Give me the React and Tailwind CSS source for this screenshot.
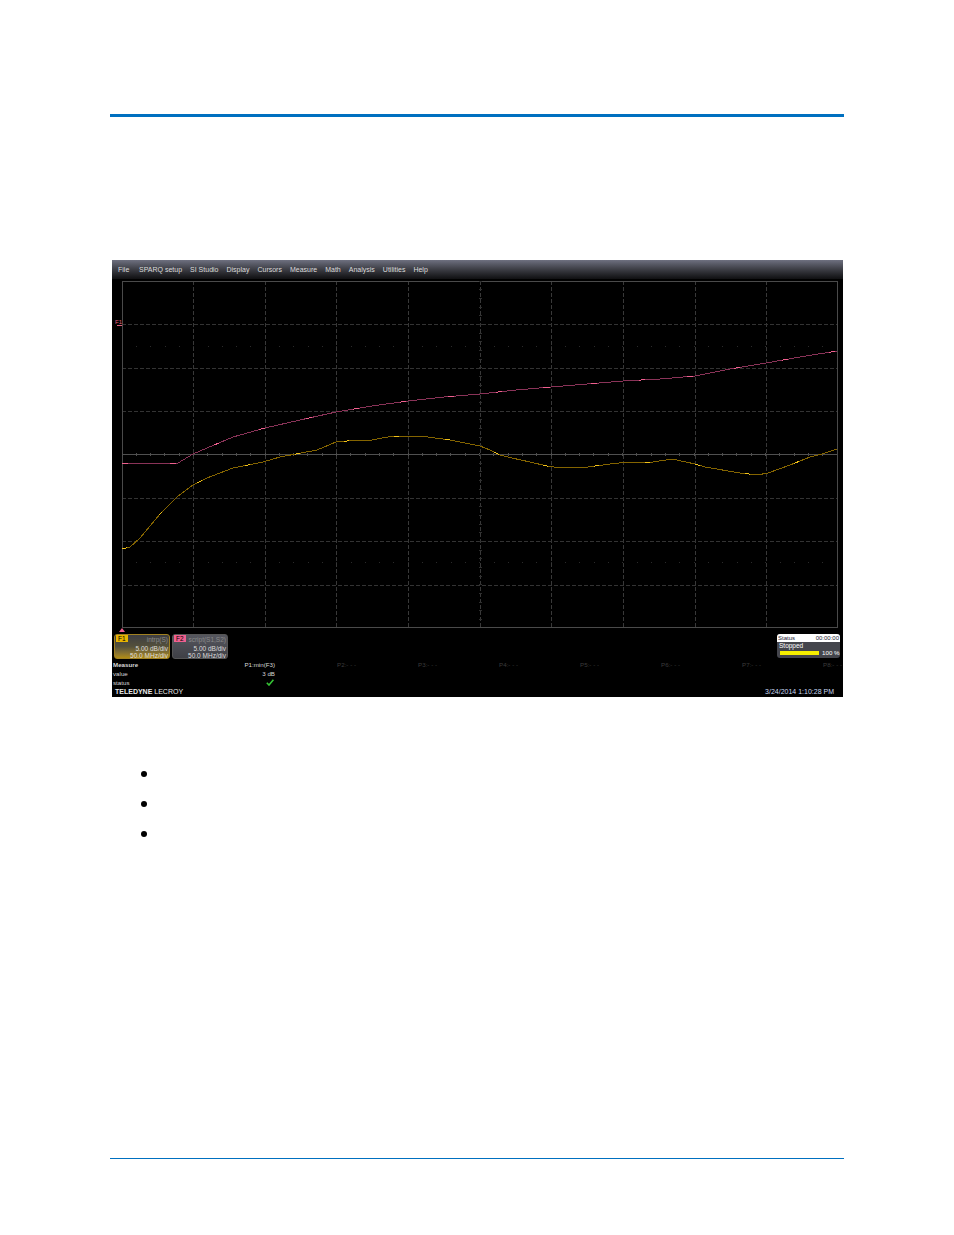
const menu = ['File', 'SPARQ setup', 'SI Studio', 'Display', 'Cursors', 'Measure', 'Math', 'Analysis', 'Utilities', 'Help'];
const vLines = [193, 265, 336, 408, 480, 551, 623, 695, 766];
const hLines = [324, 368, 411, 498, 541, 585];

const pink = '122,463 178,463 193,454 207,448 233,437 265,428 300,420 336,412 372,406 408,401 444,397 480,394 516,390 551,387 587,384 623,381 660,379 695,376 730,369 766,363 800,357 837,351';
const yellow = '122,549 130,547 140,538 150,526 160,514 177,497 193,485 207,478 233,468 263,462 280,457 317,450 336,442 347,441 372,440 393,436 408,436 428,437 450,440 480,446 490,450 500,455 512,458 530,462 547,466 554,467 588,467 610,464 628,462 653,462 672,459 695,464 705,467 740,473 757,475 768,473 790,465 810,457 822,454 837,449';

const hTicks = Array.from({ length: 50 }, (_, i) => 122 + i * 14.3);
const vTicks = Array.from({ length: 40 }, (_, i) => 281 + i * 8.68);
const dots = Array.from({ length: 50 }, (_, i) => 136 + i * 14.3);

function Plot() {
  return (
    <svg className="block" width="731" height="355" viewBox="112 279 731 355" shapeRendering="crispEdges">
      {vLines.map((x) => (
        <line key={x} x1={x} x2={x} y1="281" y2="627" stroke="#383838" strokeDasharray="4 2" />
      ))}
      {hLines.map((y) => (
        <line key={y} x1="122" x2="837" y1={y} y2={y} stroke="#333" strokeDasharray="4 2" />
      ))}
      {[346, 562].map((y) =>
        dots.map((x) => <rect key={`${x}-${y}`} x={x} y={y} width="1" height="1" fill="#2a2a2a" />)
      )}
      <rect x="122.5" y="281.5" width="715" height="346" fill="none" stroke="#4a4a4a" />
      <line x1="122" x2="837" y1="454.5" y2="454.5" stroke="#505050" />
      {hTicks.map((x) => (
        <line key={x} x1={x} x2={x} y1="453" y2="456" stroke="#505050" />
      ))}
      {vTicks.map((y) => (
        <line key={y} x1="479" x2="482" y1={y} y2={y} stroke="#2e2e2e" />
      ))}
      <polyline points={pink} fill="none" stroke="#8a3358" />
      <polyline points={pink} fill="none" stroke="#f0608f" strokeDasharray="6 42" />
      <polyline points={yellow} fill="none" stroke="#846400" />
      <polyline points={yellow} fill="none" stroke="#f2c21a" strokeDasharray="5 46" />
      <text x="115" y="324" fontSize="6" fontFamily="Liberation Sans" fill="#e0607f">F1</text>
      <line x1="117" x2="122" y1="325.5" y2="325.5" stroke="#e0607f" />
      <polygon points="122,628 125,632 119,632" fill="#f0608f" shapeRendering="auto" />
    </svg>
  );
}

function Trace({ tag, tagClass, title, scale, rate, panelClass }) {
  return (
    <div className={`w-[56px] h-[25px] rounded-[3px] border border-[#555] px-[1px] text-[6.5px] leading-[7px] text-right text-[#ddd] ${panelClass}`}>
      <div className="flex justify-between items-start">
        <span className={`px-[2px] text-[6.5px] text-black ${tagClass}`}>{tag}</span>
        <span className="text-[#8a8a8a] pt-[1px]">{title}</span>
      </div>
      <div className="mt-[2px]">{scale}</div>
      <div>{rate}</div>
    </div>
  );
}

export default function App() {
  return (
    <div className="relative w-[954px] h-[1235px] bg-white font-['Liberation_Sans',sans-serif] overflow-hidden">
      <div className="ml-[110px] mt-[114px] w-[734px] h-[3px] bg-[#0070c0]" />

      <div className="ml-[112px] mt-[143px] w-[731px] h-[437px] bg-black flex flex-col">
        <div className="h-[19px] pl-[6px] flex items-center gap-[8px] text-[7px] text-[#dcdcdc] bg-gradient-to-b from-[#6e7080] via-[#3c3d44] to-[#101012]">
          {menu.map((m, i) => (
            <span key={m} className={i === 0 ? 'pt-[2px] w-[13px]' : 'pt-[2px]'}>{m}</span>
          ))}
        </div>

        <Plot />

        <div className="flex-1 flex flex-col text-[6.2px] leading-[9px] text-[#d8d8d8]">
          <div className="flex justify-between pl-[2px] pr-[3px]">
            <div className="flex gap-[2px]">
              <Trace
                tag="F1"
                tagClass="bg-[#e8b400]"
                title="intrp(S)"
                scale="5.00 dB/div"
                rate="50.0 MHz/div"
                panelClass="bg-gradient-to-b from-[#3d3d42] via-[#54503a] to-[#b08c10] border-[#a08020]"
              />
              <Trace
                tag="F2"
                tagClass="bg-[#f0608f]"
                title="script(S1,S2)"
                scale="5.00 dB/div"
                rate="50.0 MHz/div"
                panelClass="bg-gradient-to-b from-[#55565e] to-[#3f4046]"
              />
            </div>
            <div className="w-[63px] h-[24px] rounded-[3px] bg-[#44454c] overflow-hidden">
              <div className="h-[8px] bg-white flex justify-between px-[1px] text-[6px] leading-[8px] text-[#223]">
                <span>Status</span>
                <span>00:00:00</span>
              </div>
              <div className="pl-[2px] text-[6.5px] leading-[8px] text-white">Stopped</div>
              <div className="flex items-center gap-[3px] pl-[3px] leading-[6px] text-white">
                <div className="w-[39px] h-[4px] bg-[#f6ee00]" />
                <span>100 %</span>
              </div>
            </div>
          </div>

          <div className="mt-[1px] pl-[1px] grid grid-cols-[repeat(9,81px)] auto-rows-[9px]">
            <span className="font-bold">Measure</span>
            <span className="text-right">P1:min(F3)</span>
            {['P2:- - -', 'P3:- - -', 'P4:- - -', 'P5:- - -', 'P6:- - -', 'P7:- - -', 'P8:- - -'].map((p) => (
              <span key={p} className="text-right text-[#3c3c3c]">{p}</span>
            ))}
            <span>value</span>
            <span className="text-right">3 dB</span>
            <span className="col-span-7" />
            <span>status</span>
            <span className="flex justify-end items-center pr-[1px]">
              <svg width="8" height="7" viewBox="0 0 8 7" shapeRendering="auto">
                <path d="M0.8 3.8 L3 6 L7.4 0.8" fill="none" stroke="#35c435" strokeWidth="1.6" />
              </svg>
            </span>
          </div>

          <div className="flex justify-between items-center pl-[3px] pr-[9px] h-[9px]">
            <span className="text-[7px] text-[#e8e8e8]">
              <span className="font-bold">TELEDYNE</span> LECROY
            </span>
            <span className="text-[7px] text-[#c8d8f0]">3/24/2014 1:10:28 PM</span>
          </div>
        </div>
      </div>

      <ul className="ml-[141px] mt-[74px] flex flex-col gap-[24px]">
        <li className="w-[6px] h-[6px] rounded-full bg-black" />
        <li className="w-[6px] h-[6px] rounded-full bg-black" />
        <li className="w-[6px] h-[6px] rounded-full bg-black" />
      </ul>

      <div className="ml-[110px] mt-[321px] w-[734px] h-[1px] bg-[#0070c0]" />
    </div>
  );
}
